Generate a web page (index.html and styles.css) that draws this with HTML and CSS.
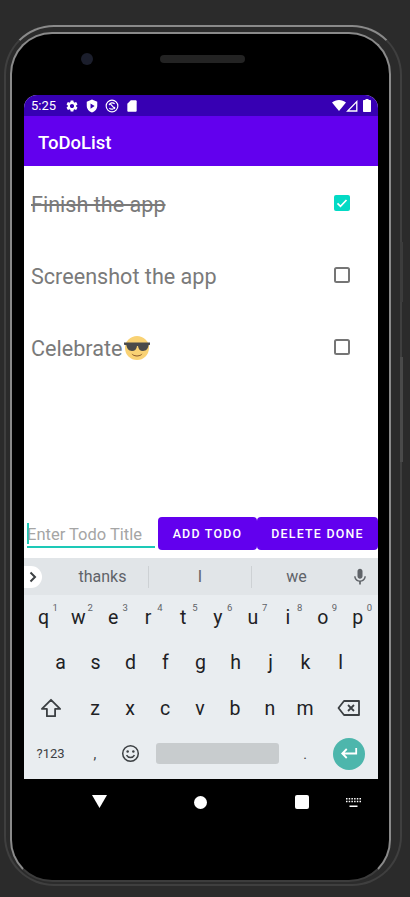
FILE: index.html
```html
<!DOCTYPE html>
<html>
<head>
	<title>ToDoList</title>
	<link rel="stylesheet" href="styles.css">
</head>
<body>
	<div class="phone">
		<div class="rocker"></div>
		<div class="power"></div>
		<div class="bezel">
			<div class="earpiece">
				<div class="camera"></div>
				<div class="speaker"></div>
			</div>
			<div class="screen">
				<div class="status">
					<span class="time">5:25</span>
					<svg class="st gear" viewBox="0 0 24 24"><path fill="#fff" d="M19.14 12.94c.04-.3.06-.61.06-.94 0-.32-.02-.64-.07-.94l2.03-1.58c.18-.14.23-.41.12-.61l-1.92-3.32c-.12-.22-.37-.29-.59-.22l-2.39.96c-.5-.38-1.03-.7-1.62-.94l-.36-2.54c-.04-.24-.24-.41-.48-.41h-3.84c-.24 0-.43.17-.47.41l-.36 2.54c-.59.24-1.13.57-1.62.94l-2.39-.96c-.22-.08-.47 0-.59.22L2.74 8.87c-.12.21-.08.47.12.61l2.03 1.58c-.05.3-.09.63-.09.94s.02.64.07.94l-2.03 1.58c-.18.14-.23.41-.12.61l1.92 3.32c.12.22.37.29.59.22l2.39-.96c.5.38 1.03.7 1.62.94l.36 2.54c.05.24.24.41.48.41h3.84c.24 0 .44-.17.47-.41l.36-2.54c.59-.24 1.13-.56 1.62-.94l2.39.96c.22.08.47 0 .59-.22l1.92-3.32c.12-.22.07-.47-.12-.61l-2.01-1.58zM12 15.6c-1.98 0-3.6-1.62-3.6-3.6s1.62-3.6 3.6-3.6 3.6 1.62 3.6 3.6-1.62 3.6-3.6 3.6z"/></svg>
					<svg class="st" viewBox="0 0 24 24"><path fill="#fff" fill-rule="evenodd" d="M12 1 3 4.5v7c0 5.5 3.8 10 9 11.5 5.200-1.500 9-6 9-11.500v-7zM9.500 7.500l7 4.500-7 4.500z"/></svg>
					<svg class="st" viewBox="0 0 24 24"><g fill="none" stroke="#fff" stroke-width="2"><circle cx="12" cy="12" r="10"/><path d="M7 10.500a5.500 5.500 0 0 1 9.500-2M17 13.500a5.500 5.500 0 0 1-9.500 2M8 7l9 10"/></g></svg>
					<svg class="st" viewBox="0 0 24 24"><path fill="#fff" d="M18 2h-8L4 8v12c0 1.100.9 2 2 2h12c1.100 0 2-.9 2-2V4c0-1.100-.9-2-2-2z"/></svg>
					<div class="status-right">
						<svg class="wifi" viewBox="0 0 14 11"><path fill="#fff" d="M0 2.500C2 .9 4.400 0 7 0s5 .9 7 2.500L7 11z"/></svg>
						<svg class="signal" viewBox="0 0 12 12"><path fill="none" stroke="#fff" stroke-width="1.300" d="M10.800 1.600V11H1.600z"/></svg>
						<svg class="battery" viewBox="0 0 8 13"><path fill="#fff" d="M2.500 0h3v1H7c.6 0 1 .4 1 1v10c0 .6-.4 1-1 1H1c-.6 0-1-.4-1-1V2c0-.6.4-1 1-1h1.500z"/></svg>
					</div>
				</div>
				<div class="toolbar">ToDoList</div>

				<div class="content">
					<div class="todo">
						<span class="title done">Finish the app</span>
						<svg class="check" viewBox="0 0 16 16"><rect width="16" height="16" rx="2" fill="#03dac5"/><path d="M3.500 8.300l3 3 6-6.300" fill="none" stroke="#fff" stroke-width="1.700"/></svg>
					</div>
					<div class="todo">
						<span class="title">Screenshot the app</span>
						<svg class="check" viewBox="0 0 16 16"><rect x="1" y="1" width="14" height="14" rx="1.500" fill="none" stroke="#757575" stroke-width="2"/></svg>
					</div>
					<div class="todo">
						<span class="title">Celebrate<svg class="emoji" viewBox="0 0 26 24"><circle cx="13" cy="12" r="12" fill="#f9d274"/><path d="M0 6.500h26v2.300l-1.500.5c-.5 4-2.500 5.700-5.500 5.700-3 0-4.700-2-5-5h-1c-.3 3-2 5-5 5s-5-1.700-5.500-5.700L0 8.800z" fill="#4a4a4a"/><path d="M7.500 17.500c3 2.600 8 2.600 11 0-1.500 4-9.500 4-11 0z" fill="#8a5a2c"/></svg></span>
						<svg class="check" viewBox="0 0 16 16"><rect x="1" y="1" width="14" height="14" rx="1.500" fill="none" stroke="#757575" stroke-width="2"/></svg>
					</div>
				</div>

				<div class="entry">
					<div class="field">Enter Todo Title</div>
					<button class="btn add">ADD TODO</button>
					<button class="btn del">DELETE DONE</button>
				</div>

				<div class="keyboard">
					<div class="suggest">
						<div class="chevron"><svg viewBox="0 0 10 12"><path d="M2.500 1.500 7 6l-4.500 4.500" fill="none" stroke="#3c4043" stroke-width="2"/></svg></div>
						<span class="word first">thanks</span>
						<span class="word sep">I</span>
						<span class="word sep third">we</span>
						<svg class="mic" viewBox="0 0 24 24"><path fill="#5f6368" d="M12 14c1.700 0 3-1.300 3-3V5c0-1.700-1.300-3-3-3S9 3.300 9 5v6c0 1.700 1.300 3 3 3zm5.300-3c0 3-2.500 5.100-5.300 5.100S6.700 14 6.700 11H5c0 3.400 2.700 6.200 6 6.700V21h2v-3.300c3.300-.5 6-3.300 6-6.700z"/></svg>
					</div>
					<div class="row top">
						<div class="key">q<sup>1</sup></div>
						<div class="key">w<sup>2</sup></div>
						<div class="key">e<sup>3</sup></div>
						<div class="key">r<sup>4</sup></div>
						<div class="key">t<sup>5</sup></div>
						<div class="key">y<sup>6</sup></div>
						<div class="key">u<sup>7</sup></div>
						<div class="key">i<sup>8</sup></div>
						<div class="key">o<sup>9</sup></div>
						<div class="key">p<sup>0</sup></div>
					</div>
					<div class="row inset">
						<div class="key">a</div>
						<div class="key">s</div>
						<div class="key">d</div>
						<div class="key">f</div>
						<div class="key">g</div>
						<div class="key">h</div>
						<div class="key">j</div>
						<div class="key">k</div>
						<div class="key">l</div>
					</div>
					<div class="row third-row">
						<div class="key wide"><svg class="shift" viewBox="0 0 24 22"><path d="M12 2 2 12h5.500v8h9v-8H22z" fill="none" stroke="#3c4043" stroke-width="2" stroke-linejoin="round"/></svg></div>
						<div class="key">z</div>
						<div class="key">x</div>
						<div class="key">c</div>
						<div class="key">v</div>
						<div class="key">b</div>
						<div class="key">n</div>
						<div class="key">m</div>
						<div class="key wide"><svg class="bksp" viewBox="0 0 24 18"><path d="M7 2h15v14H7L1.500 9z" fill="none" stroke="#3c4043" stroke-width="1.800" stroke-linejoin="round"/><path d="M11 6l6 6M17 6l-6 6" stroke="#3c4043" stroke-width="1.800"/></svg></div>
					</div>
					<div class="row last">
						<div class="key sym wide">?123</div>
						<div class="key punct">,</div>
						<div class="key"><svg class="smile" viewBox="0 0 20 20"><g fill="none" stroke="#3c4043" stroke-width="1.600"><circle cx="10" cy="10" r="8.200"/><path d="M5.800 11.800c1.800 3.200 6.600 3.200 8.400 0"/></g><circle cx="7" cy="7.800" r="1.300" fill="#3c4043"/><circle cx="13" cy="7.800" r="1.300" fill="#3c4043"/></svg></div>
						<div class="space-key"><div class="space"></div></div>
						<div class="key punct">.</div>
						<div class="key wide"><div class="enter"><svg viewBox="0 0 20 14"><path d="M18 1v6H3M7.500 2 2.500 7l5 5" fill="none" stroke="#fff" stroke-width="2"/></svg></div></div>
					</div>
				</div>
			</div>

			<div class="nav">
				<svg class="back" viewBox="0 0 15 13"><path fill="#fff" d="M0 0h15L7.500 13z"/></svg>
				<div class="home"></div>
				<div class="recents"></div>
				<svg class="kbd" viewBox="0 0 15 9"><path fill="#fff" d="M0 0h1.500v1.500H0zM2.700 0h1.500v1.500H2.700zM5.400 0h1.500v1.500H5.400zM8.100 0h1.500v1.500H8.100zM10.800 0h1.500v1.500h-1.500zM13.500 0H15v1.500h-1.500zM0 2.700h1.500v1.500H0zM2.700 2.700h1.500v1.500H2.700zM5.400 2.700h1.500v1.500H5.400zM8.100 2.700h1.500v1.500H8.100zM10.800 2.700h1.500v1.500h-1.500zM13.500 2.700H15v1.500h-1.500zM3.500 7.500h8V9h-8z"/></svg>
			</div>
		</div>
	</div>
</body>
</html>
```

FILE: styles.css
```css
* {
	box-sizing: border-box;
}
body {
	margin: 0;
	height: 897px;
	overflow: hidden;
	background: #2b2b2b;
	font-family: Roboto, "Noto Sans", sans-serif;
}

/* device frame */
.phone {
	position: relative;
	width: 398px;
	height: 861px;
	margin: 25px 0 0 4px;
	padding: 5px 0 0 4px;
	border: 2px solid #3f3f3f;
	border-top-color: #8a8a8a;
	border-radius: 50px;
}
.rocker {
	position: absolute;
	right: -3px;
	top: 215px;
	width: 3px;
	height: 60px;
	background: #3c3c3c;
}
.power {
	position: absolute;
	right: -3px;
	top: 330px;
	width: 3px;
	height: 105px;
	background: #4a4a4a;
}
.bezel {
	width: 381px;
	height: 850px;
	padding: 0 11px 0 12px;
	background: #000;
	border: 2px solid #8a8a8a;
	border-bottom-color: #3c3c3c;
	border-radius: 42px;
}
.earpiece {
	display: flex;
	align-items: center;
	height: 61px;
	padding: 0 0 11px 57px;
}
.camera {
	width: 12px;
	height: 12px;
	border-radius: 50%;
	background: #1b1e2c;
}
.speaker {
	width: 85px;
	height: 8px;
	margin-left: 67px;
	border-radius: 4px;
	background: #232323;
}
.screen {
	width: 354px;
	height: 684px;
	display: flex;
	flex-direction: column;
	background: #fff;
	border-radius: 13px 13px 0 0;
	overflow: hidden;
}

/* status bar */
.status {
	display: flex;
	align-items: center;
	height: 21px;
	padding: 0 7px;
	gap: 6px;
	background: #3700b3;
	color: #fff;
}
.time {
	width: 26px;
	margin-right: 2px;
	font-size: 13px;
}
.st {
	width: 14px;
	height: 14px;
}
.status-right {
	display: flex;
	align-items: center;
	margin-left: auto;
}
.wifi {
	width: 14px;
	height: 11px;
}
.signal {
	width: 12px;
	height: 12px;
}
.battery {
	width: 8px;
	height: 13px;
	margin-left: 5px;
}

.toolbar {
	height: 50px;
	padding: 0 14px;
	line-height: 54px;
	background: #6200ee;
	color: #fff;
	font-size: 18.5px;
	font-weight: 500;
}

/* list */
.content {
	flex: 1;
	padding-top: 1px;
}
.todo {
	display: flex;
	align-items: center;
	justify-content: space-between;
	height: 72px;
	padding: 0 28px 0 7px;
}
.title {
	display: flex;
	align-items: center;
	padding-top: 2px;
	font-size: 21.6px;
	color: #7a7a7a;
}
.title.done {
	text-decoration: line-through;
}
.check {
	width: 16px;
	height: 16px;
}
.emoji {
	width: 26px;
	height: 24px;
	margin-left: 1px;
}

/* add row */
.entry {
	display: flex;
	align-items: flex-start;
	height: 41px;
	padding-left: 3px;
}
.field {
	width: 128px;
	height: 31px;
	margin-right: 3px;
	padding-top: 7px;
	border-bottom: 2px solid #1dc9b7;
	font-size: 16.5px;
	line-height: 22px;
	color: #a5a5a5;
	white-space: nowrap;
	background: linear-gradient(#1dc9b7, #1dc9b7) no-repeat 0 6px / 2px 21px;
}
.btn {
	height: 33px;
	padding: 0;
	border: 0;
	border-radius: 4px;
	background: #6200ee;
	color: #fff;
	font-family: inherit;
	font-size: 12.4px;
	font-weight: 500;
	letter-spacing: 1.25px;
}
.add {
	width: 99px;
}
.del {
	width: 121px;
}

/* keyboard */
.keyboard {
	height: 221px;
	background: #e9edf0;
}
.suggest {
	display: flex;
	align-items: center;
	height: 37px;
	background: #e1e5e8;
}
.chevron {
	display: flex;
	align-items: center;
	width: 18px;
	height: 22px;
	padding-left: 4px;
	margin-right: 3px;
	background: #fff;
	border-radius: 0 11px 11px 0;
}
.chevron svg {
	width: 10px;
	height: 12px;
}
.word {
	height: 22px;
	line-height: 22px;
	width: 103px;
	text-align: center;
	font-size: 16px;
	color: #5f6368;
}
.word.first {
	padding-left: 12px;
}
.word.sep {
	border-left: 1px solid #cdd1d4;
}
.word.third {
	width: 90px;
}
.mic {
	width: 20px;
	height: 20px;
	margin-left: 9px;
}
.row {
	display: flex;
	height: 45.3px;
}
.row.top {
	padding: 0 3px 0 2px;
}
.row.inset {
	padding: 0 20px 0 19px;
}
.row.third-row {
	padding: 0 3px 0 1px;
}
.row.last {
	padding-right: 2px;
}
.key {
	position: relative;
	flex: 1;
	display: flex;
	align-items: center;
	justify-content: center;
	font-size: 19.5px;
	color: #202124;
}
.key sup {
	position: absolute;
	top: 7px;
	right: 3px;
	font-size: 9.5px;
	line-height: 11px;
	color: #5f6368;
}
.row .wide {
	flex: 1.5;
}
.row .sym {
	font-size: 13px;
	color: #3c4043;
}
.row .punct {
	font-size: 14px;
	color: #3c4043;
}
.shift {
	width: 22px;
	height: 20px;
}
.bksp {
	width: 24px;
	height: 18px;
}
.smile {
	width: 19px;
	height: 19px;
}
.space-key {
	flex: 0 0 139px;
	display: flex;
	align-items: center;
	justify-content: center;
}
.space {
	width: 123px;
	height: 21px;
	border-radius: 3px;
	background: #c8ccce;
}
.enter {
	display: flex;
	align-items: center;
	justify-content: center;
	width: 32px;
	height: 32px;
	border-radius: 50%;
	background: #4db6ac;
}
.enter svg {
	width: 18px;
	height: 13px;
}

/* nav bar */
.nav {
	display: flex;
	align-items: center;
	height: 46px;
	padding-left: 68px;
}
.back {
	width: 15px;
	height: 13px;
	margin-bottom: 1px;
}
.home {
	width: 13px;
	height: 13px;
	margin-left: 87px;
	border-radius: 50%;
	background: #fff;
}
.recents {
	width: 14px;
	height: 14px;
	margin-left: 88px;
	border-radius: 2px;
	background: #fff;
}
.kbd {
	width: 15px;
	height: 9px;
	margin-left: 37px;
}
```
